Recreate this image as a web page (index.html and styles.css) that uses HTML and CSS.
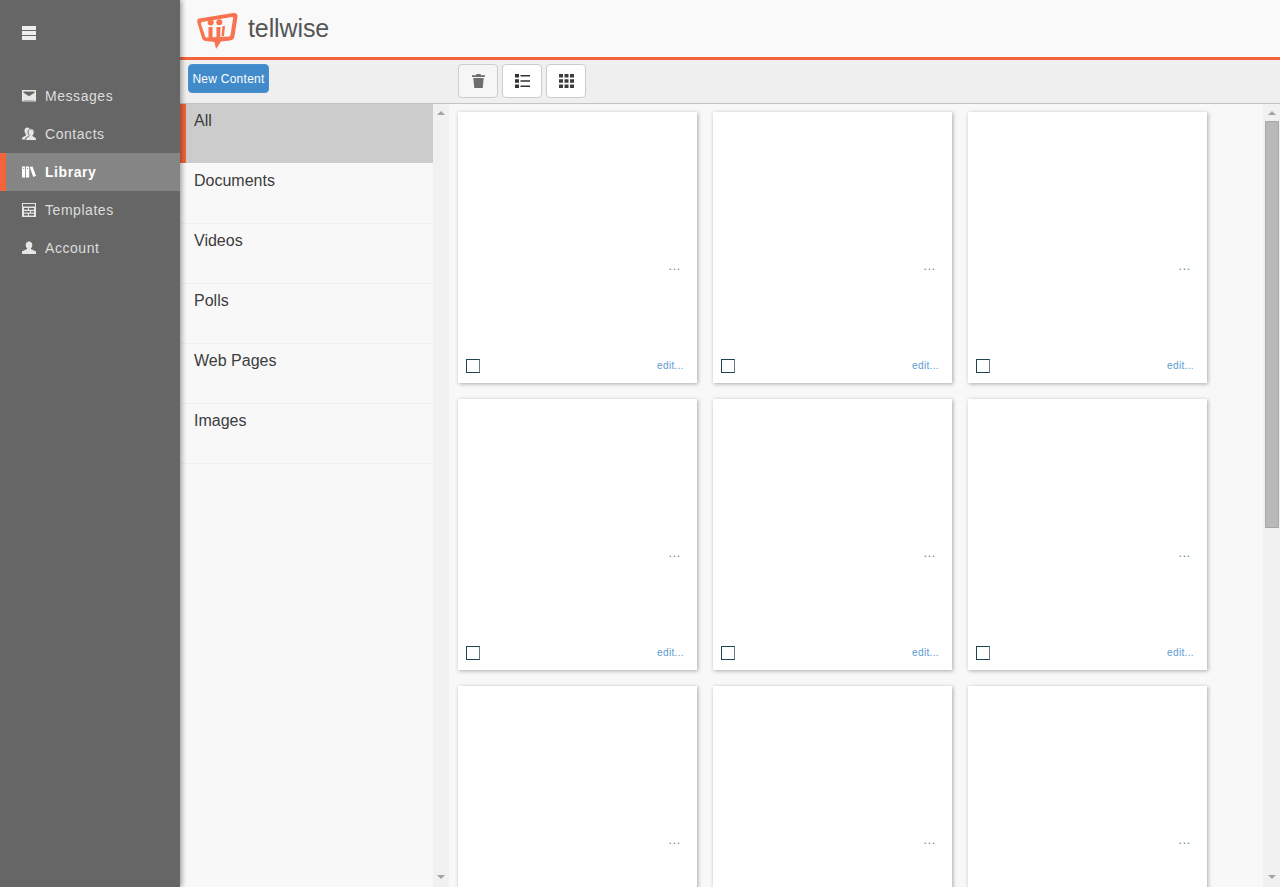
FILE: index.html
```html
<!DOCTYPE html>
<html lang="en">
<head>
<meta charset="utf-8">
<title>tellwise</title>
<link rel="stylesheet" href="styles.css">
</head>
<body>
<div class="app">
  <aside class="sidebar">
    <div class="burger"><svg width="14" height="14" viewBox="0 0 14 14"><path fill="#eee" d="M0 0h14v4H0zM0 5h14v4H0zM0 10h14v4H0z"/></svg></div>
    <nav class="nav">
      <a class="nav-item"><svg class="nav-icon" viewBox="0 0 14 14"><path fill="#e6e6e6" d="M0 1h14v11.500H0z"/><path fill="#666" d="M1.500 2.500h11v1.200L7 7.200 1.500 3.700z"/><path fill="#666" d="M1.500 11h11v.4h-11z"/></svg><span>Messages</span></a>
      <a class="nav-item"><svg class="nav-icon" viewBox="0 0 14 14"><path fill="#e6e6e6" d="M5.500.500C7 .500 8 1.500 8 3c0 1.300-.6 2.600-1.300 3.200 0 .6.700 1 1.500 1.300L5 12.500H0V10.800C1.500 9.500 4 9 4 8c0-.500-1.500-1.800-1.500-4.500C2.500 1.800 4 .500 5.500.500z"/><path fill="#e6e6e6" stroke="#666" stroke-width=".9" d="M9 1.800c2 0 3.200 1.500 3.200 3.400 0 1.500-.6 2.700-1.400 3.400 0 .9 2 1.200 3.600 2.300V13.500H3.800V10.900c1.600-1.100 3.600-1.400 3.600-2.300C6.600 7.900 6 6.700 6 5.200 6 3.300 7 1.800 9 1.800z"/></svg><span>Contacts</span></a>
      <a class="nav-item active"><svg class="nav-icon" viewBox="0 0 14 14"><path fill="#fff" fill-rule="evenodd" d="M0 1.500h3.200v11H0zM4 1.500h3.200v11H4zM1 3.200v.8h1.200v-.8zM5 3.200v.8h1.200v-.8zM7.800 2.300l2.600-1 3.600 9.500-2.800 1.200z"/></svg><span>Library</span></a>
      <a class="nav-item"><svg class="nav-icon" viewBox="0 0 14 14"><path fill="#e6e6e6" fill-rule="evenodd" d="M0 0h14v14H0zM1 1v2.500h12V1zM2 5v1.800h4V5zM7 5v1.800h5V5zM2 8v1.500h6V8zM9 8v1.500h3V8zM2 10.700v1.800h4v-1.800zM7 10.700v1.800h5v-1.800z"/></svg><span>Templates</span></a>
      <a class="nav-item"><svg class="nav-icon" viewBox="0 0 14 14"><path fill="#e6e6e6" d="M7 .5c2 0 3.300 1.500 3.300 3.500 0 1.500-.6 2.800-1.500 3.500 0 1 3 1.500 5.200 3V13H0v-2.500c2.200-1.500 5.200-2 5.200-3C4.300 6.800 3.700 5.500 3.700 4 3.700 2 5 .5 7 .5z"/></svg><span>Account</span></a>
    </nav>
  </aside>
  <div class="main">
    <header class="topbar">
      <svg class="logo" width="42" height="40" viewBox="0 0 42 40">
        <path fill="#f97350" d="M3 7.500 37 2q5-.5 4.500 4L38.500 25q-.5 4-4.500 4.500l-9 1L20 38l-1.500-7-8.500-1q-3 0-4-3L1.500 12Q.5 8 3 7.500z"/>
        <path fill="#f9f9f9" d="M6 11 36 6q1.500 0 1 2l-2.500 16q-.5 1.500-1.500 1.500l-22.500 1q-1 0-1.500-1.500L5 13q-.5-2 1-2z"/>
        <circle fill="#f97350" cx="14.700" cy="11.500" r="3"/>
        <circle fill="#f97350" cx="23.300" cy="11.200" r="3"/>
        <path fill="#f97350" d="M12.500 16h4v12h-4zM20.500 16h4l-.5 15-2 3-1.500-3z"/>
        <path fill="#f97350" d="M26.500 15h2.500l-1 10h-2.500z"/>
      </svg>
      <span class="brand">tellwise</span>
    </header>
    <div class="toolbar">
      <div class="toolbar-left"><button class="btn-new">New Content</button></div>
      <div class="toolbar-right">
        <button class="tool tool-muted"><svg width="13" height="14" viewBox="0 0 13 14"><path fill="#6e6e6e" d="M4.500 0h4L9 1.300h4v1.700H0V1.300h4zM1.300 4h10.400l-1 10H2.300z"/></svg></button>
        <button class="tool"><svg width="15" height="14" viewBox="0 0 15 14"><path fill="#333" d="M0 0h4v3.500H0zM0 5.200h4v3.500H0zM0 10.500h4V14H0zM5.500 1h9.500v1.500H5.500zM5.500 6.200h9.500v1.500H5.500zM5.500 11.500h9.500V13H5.500z"/></svg></button>
        <button class="tool"><svg width="15" height="14" viewBox="0 0 15 14"><path fill="#3c3c3c" d="M0 0h4v3.500H0zM5.500 0h4v3.500h-4zM11 0h4v3.500h-4zM0 5.200h4v3.500H0zM5.500 5.200h4v3.500h-4zM11 5.200h4v3.500h-4zM0 10.500h4V14H0zM5.500 10.500h4V14h-4zM11 10.500h4V14h-4z"/></svg></button>
      </div>
    </div>
    <div class="body">
      <ul class="cats">
        <li class="cat selected">All</li>
        <li class="cat">Documents</li>
        <li class="cat">Videos</li>
        <li class="cat">Polls</li>
        <li class="cat">Web Pages</li>
        <li class="cat">Images</li>
      </ul>
      <div class="scroll scroll-left">
        <span class="arrow-up"></span>
        <span class="arrow-down"></span>
      </div>
      <div class="grid">
        <div class="card"><span class="dots">...</span><div class="card-foot"><span class="check"></span><a class="edit">edit...</a></div></div>
        <div class="card"><span class="dots">...</span><div class="card-foot"><span class="check"></span><a class="edit">edit...</a></div></div>
        <div class="card"><span class="dots">...</span><div class="card-foot"><span class="check"></span><a class="edit">edit...</a></div></div>
        <div class="card"><span class="dots">...</span><div class="card-foot"><span class="check"></span><a class="edit">edit...</a></div></div>
        <div class="card"><span class="dots">...</span><div class="card-foot"><span class="check"></span><a class="edit">edit...</a></div></div>
        <div class="card"><span class="dots">...</span><div class="card-foot"><span class="check"></span><a class="edit">edit...</a></div></div>
        <div class="card"><span class="dots">...</span><div class="card-foot"><span class="check"></span><a class="edit">edit...</a></div></div>
        <div class="card"><span class="dots">...</span><div class="card-foot"><span class="check"></span><a class="edit">edit...</a></div></div>
        <div class="card"><span class="dots">...</span><div class="card-foot"><span class="check"></span><a class="edit">edit...</a></div></div>
      </div>
      <div class="scroll scroll-right">
        <span class="arrow-up"></span>
        <span class="thumb"></span>
        <span class="arrow-down"></span>
      </div>
    </div>
  </div>
</div>
</body>
</html>
```

FILE: styles.css
```css
* { box-sizing: border-box; }
html, body { margin: 0; height: 100%; overflow: hidden; }
body { font-family: "Liberation Sans", Arial, sans-serif; color: #333; background: #f8f8f8; }
.app { display: flex; height: 887px; }

.sidebar { width: 180px; flex: none; background: #666; position: relative; z-index: 2; box-shadow: 2px 0 5px rgba(0,0,0,.35); }
.burger { height: 77px; padding: 26px 0 0 22px; line-height: 0; }
.nav { display: flex; flex-direction: column; }
.nav-item { height: 38px; display: flex; align-items: center; padding-left: 22px; font-size: 14px; letter-spacing: .55px; color: #ddd; }
.nav-icon { width: 14px; height: 14px; margin-right: 9px; flex: none; }
.nav-item.active { background: #858585; color: #fff; font-weight: 700; border-left: 6px solid #f4643c; padding-left: 16px; }

.main { flex: 1; min-width: 0; display: flex; flex-direction: column; }
.topbar { height: 60px; flex: none; display: flex; align-items: center; background: #f9f9f9; border-bottom: 3px solid #f4643c; padding: 0 0 0 16px; }
.logo { margin: 4px 10px 0 0; flex: none; }
.brand { font-size: 25px; letter-spacing: -.1px; color: #555; }

.toolbar { height: 44px; flex: none; display: flex; background: #efefef; border-bottom: 1px solid #c4c4c4; padding: 4px 0 0 8px; }
.toolbar-left { width: 270px; flex: none; }
.btn-new { width: 81px; height: 29px; padding: 0; font: 12px "Liberation Sans", Arial, sans-serif; letter-spacing: .25px; color: #fff; background: #428bca; border: 1px solid #4a8fcb; border-radius: 4px; }
.toolbar-right { display: flex; gap: 4px; align-items: flex-start; }
.tool { width: 40px; height: 34px; padding: 0; background: #fff; border: 1px solid #ccc; border-radius: 4px; display: flex; align-items: center; justify-content: center; }
.tool-muted { background: #f6f6f6; }

.body { flex: 1; min-height: 0; display: flex; overflow: hidden; }
.cats { width: 253px; flex: none; margin: 0; padding: 0; list-style: none; background: #f8f8f8; }
.cat { height: 60px; padding: 8px 0 0 14px; font-size: 16px; line-height: 18px; color: #3c3c3c; border-bottom: 1px solid #efefef; }
.cat.selected { background: #ccc; background-clip: padding-box; border-left: 6px solid #f4643c; padding-left: 8px; border-bottom: 0; height: 59px; margin-bottom: 1px; }

.scroll { width: 16px; flex: none; background: #f1f1f1; position: relative; }
.scroll-right { width: 17px; }
.arrow-up, .arrow-down { position: absolute; left: 50%; margin-left: -4px; width: 0; height: 0; border-left: 4px solid transparent; border-right: 4px solid transparent; }
.arrow-up { top: 7px; border-bottom: 4px solid #a3a3a3; }
.arrow-down { bottom: 8px; border-top: 4px solid #a3a3a3; }
.thumb { position: absolute; top: 17px; left: 2px; width: 14px; height: 407px; background: #b9b9b9; border: 1px solid #a8a8a8; }

.grid { flex: 1; min-width: 0; display: grid; grid-template-columns: repeat(3, 239px); grid-auto-rows: 271px; gap: 16px; padding: 8px 0 0 9px; align-content: start; background: #f8f8f8; }
.card { background: #fff; box-shadow: 1px 1px 4px rgba(0,0,0,.32); display: flex; flex-direction: column; position: relative; }
.dots { position: absolute; right: 16px; top: 147px; font-size: 12px; line-height: 14px; letter-spacing: .8px; color: #55858a; }
.card-foot { margin-top: auto; height: 34px; padding: 0 13px 0 8px; display: flex; align-items: flex-start; justify-content: space-between; }
.check { width: 14px; height: 14px; margin-top: 10px; border: 1px solid #1f4450; border-right-color: #6a7a80; }
.edit { font-size: 10px; line-height: 12px; margin-top: 11px; letter-spacing: .35px; color: #5b9bd0; }
```
